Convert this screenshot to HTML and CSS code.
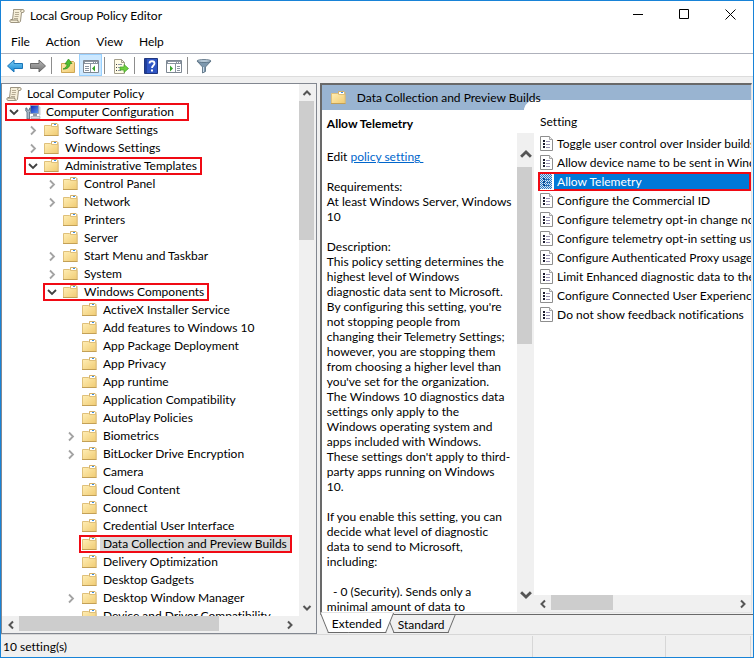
FILE: index.html
```html
<!DOCTYPE html>
<html lang="en">

<head>
    <meta charset="UTF-8">
    <title>Local Group Policy Editor</title>
    <link rel="stylesheet" href="styles.css">
</head>

<body>
    <svg class="sprite" aria-hidden="true">
        <defs>
            <linearGradient id="folder-fill" x1="0" y1="0" x2="1" y2="1">
                <stop offset="0" stop-color="#ffeeb5" />
                <stop offset="1" stop-color="#f0cb72" />
            </linearGradient>
            <linearGradient id="blue-fill" x1="0" y1="0" x2="0" y2="1">
                <stop offset="0" stop-color="#7fd0f5" />
                <stop offset="1" stop-color="#1284d2" />
            </linearGradient>
            <linearGradient id="gray-fill" x1="0" y1="0" x2="0" y2="1">
                <stop offset="0" stop-color="#b9b9b9" />
                <stop offset="1" stop-color="#717171" />
            </linearGradient>
            <linearGradient id="screen-fill" x1="0" y1="0" x2="1" y2="1">
                <stop offset="0" stop-color="#0a1fae" />
                <stop offset="1" stop-color="#5f9cf5" />
            </linearGradient>
            <symbol id="folder" viewBox="0 0 16 16">
                <path d="M7.500 1.500h5.500l1 1v11H7.500z" fill="#ecd08a" stroke="#d3b06a" />
                <path d="M8 2h5v2H8z" fill="#fff" />
                <path d="M10 2h2v1h-2z" fill="#3d8fe0" />
                <path d="M.5 3.500h6l1.500 1h6v9H.5z" fill="url(#folder-fill)" stroke="#dfc07a" />
                <path d="M0 13.500h14.500" stroke="#c3a056" />
            </symbol>
            <symbol id="scroll" viewBox="0 0 16 16">
                <path d="M4.500 1.500h9.500c1.500 0 1.500 3 0 3h-1.500l-1 8.500c0 1-1 1.500-2 1.500H2c-1.500 0-1.500-3 0-3h1.500l1-8z" fill="#f6efd9" stroke="#9c9480" />
                <path d="M12.500 4.500c-1.500-.5-1-3 1-3" fill="none" stroke="#9c9480" />
                <path d="M2 12h7c-.8 1 0 2 1 2" fill="none" stroke="#8a826c" />
                <path d="M6 4.500h4M6 6.500h4M5.500 8.500h4M5 10.500h4" stroke="#b5ab93" />
            </symbol>
            <symbol id="computer" viewBox="0 0 16 16">
                <path d="M5.500 1.500h8v8h-8z" fill="url(#screen-fill)" stroke="#8f9db8" />
                <path d="M14 2l1.500 1v8l-1.500 1z" fill="#c8ced6" />
                <path d="M8 10h4v2H8z" fill="#8d97a5" />
                <path d="M6 12.500h9v2H6z" fill="#d8dde4" stroke="#8b95a2" stroke-width=".6" />
                <path d="M.8 4v3l1.200 1v7h2.500V8l1.200-1V4L4.500 4v2H2V4z" fill="#a8b8c8" stroke="#4f6478" stroke-width=".8" />
            </symbol>
            <symbol id="page" viewBox="0 0 14 16">
                <path d="M.5.500h9l3 3v11H.5z" fill="#fff" stroke="#8e8e8e" />
                <path d="M9.500.500v3h3" fill="#eee" stroke="#a5a5a5" />
                <path d="M3 4h2v2H3zM3 7h2v2H3zM3 10h2v2H3z" fill="#1c1c30" />
                <path d="M6 5.500h4M6 8.500h4M6 11.500h4" stroke="#9a93b5" />
            </symbol>
            <pattern id="dots" width="2" height="2" patternUnits="userSpaceOnUse">
                <path d="M0 0h2v2H0z" fill="#d6e4f2" />
                <path d="M0 0h1v1H0zM1 1h1v1H1z" fill="#2878c4" />
            </pattern>
            <symbol id="page-selected" viewBox="0 0 14 16">
                <path d="M0 0h14v16H0z" fill="#fff" />
                <path d="M0 0h12v15H0z" fill="url(#dots)" />
                <path d="M3 4h2v2H3zM3 7h2v2H3zM3 10h2v2H3z" fill="#0a4a90" />
                <path d="M6 5.500h4M6 8.500h4M6 11.500h4" stroke="#2c6fb4" />
            </symbol>
            <symbol id="chevron-right" viewBox="0 0 12 12">
                <path d="M4 2.500l4 4-4 4" fill="none" stroke="#a3a3a3" stroke-width="1.800" />
            </symbol>
            <symbol id="chevron-down" viewBox="0 0 12 12">
                <path d="M2 4l4 4 4-4" fill="none" stroke="#404040" stroke-width="1.800" />
            </symbol>
            <symbol id="arrow" viewBox="0 0 10 10">
                <path d="M1.500 7L5 3.500 8.500 7" fill="none" stroke="#555" stroke-width="2" />
            </symbol>
        </defs>
    </svg>

    <div class="window">
        <header class="titlebar">
            <svg class="icon"><use href="#scroll" /></svg>
            <h1>Local Group Policy Editor</h1>
            <div class="controls">
                <button aria-label="Minimize"><svg width="11" height="11"><path d="M0 5.500h10" stroke="#000" /></svg></button>
                <button aria-label="Maximize"><svg width="11" height="11"><path d="M.5.500h9v9h-9z" fill="none" stroke="#000" /></svg></button>
                <button aria-label="Close"><svg width="11" height="11"><path d="M.5.500l10 10M10.500.500l-10 10" stroke="#000" /></svg></button>
            </div>
        </header>

        <nav class="menu">
            <button>File</button>
            <button>Action</button>
            <button>View</button>
            <button>Help</button>
        </nav>

        <div class="toolbar">
            <button aria-label="Back">
                <svg class="icon" viewBox="0 0 16 16"><path d="M.5 8L7 2v3.500h8.500v5H7V14z" fill="url(#blue-fill)" stroke="#1a75b8" /></svg>
            </button>
            <button aria-label="Forward">
                <svg class="icon" viewBox="0 0 16 16"><path d="M15.500 8L9 2v3.500H.5v5H9V14z" fill="url(#gray-fill)" stroke="#6a6a6a" /></svg>
            </button>
            <span class="sep"></span>
            <button aria-label="Up one level">
                <svg class="icon" viewBox="0 0 16 16">
                    <path d="M1.500 5.500h6l1-2h5l1 1v10h-13z" fill="url(#folder-fill)" stroke="#cda654" />
                    <path d="M3 11c3-1 4-3 4-5H5l3.500-5L12 5.500h-2C10 9 7 11.500 3 11z" fill="#4fbf2f" stroke="#2c8a1b" stroke-width=".7" />
                </svg>
            </button>
            <button class="active" aria-label="Show/Hide Console Tree">
                <svg class="icon" viewBox="0 0 16 16">
                    <path d="M.5 2.500h15v12H.5z" fill="#fff" stroke="#7d8792" />
                    <path d="M1 3h14v3H1z" fill="#8b95a1" />
                    <path d="M2 4.500h8M11 4.500h1M13 4.500h1" stroke="#fff" />
                    <path d="M7.500 6v8M2 8.500h4M2 10.500h4M2 12.500h4" stroke="#8b95a1" />
                    <path d="M12 7.500v6l-3-3z" fill="#35a329" />
                </svg>
            </button>
            <span class="sep"></span>
            <button aria-label="Export List">
                <svg class="icon" viewBox="0 0 16 16">
                    <path d="M1.500 1.500h7l3 3v11h-10z" fill="#fffbe6" stroke="#a39f8c" />
                    <path d="M8.500 1.500v3h3" fill="none" stroke="#a39f8c" />
                    <path d="M3 6.500h1M3 9.500h1M3 12.500h1" stroke="#444" />
                    <path d="M5 6.500h4M5 9.500h3M5 12.500h3" stroke="#8d97a8" />
                    <path d="M7 9h4V6.500l4.500 4-4.500 4V12H7z" fill="#6fcf3f" stroke="#3f9f22" stroke-width=".7" />
                </svg>
            </button>
            <span class="sep"></span>
            <button aria-label="Help">
                <svg class="icon" viewBox="0 0 16 16">
                    <path d="M1.500.500h13v15h-13z" fill="#2f55c4" stroke="#20377f" />
                    <path d="M2 1h2v14H2z" fill="#203f9c" />
                    <path d="M6.500 5.500c0-3 5-3 5 0 0 2-2.500 2-2.500 4.500" fill="none" stroke="#fff" stroke-width="1.800" />
                    <path d="M8 11.500h2v2H8z" fill="#fff" />
                </svg>
            </button>
            <button aria-label="Show/Hide Action Pane">
                <svg class="icon" viewBox="0 0 16 16">
                    <path d="M.5 2.500h15v12H.5z" fill="#fff" stroke="#7d8792" />
                    <path d="M1 3h14v3H1z" fill="#8b95a1" />
                    <path d="M2 4.500h8M11 4.500h1M13 4.500h1" stroke="#fff" />
                    <path d="M9.500 6v8M11 8.500h3M11 10.500h3M11 12.500h3" stroke="#8b95a1" />
                    <path d="M4 7.500v6l3-3z" fill="#35a329" />
                </svg>
            </button>
            <span class="sep"></span>
            <button aria-label="Filter">
                <svg class="icon" viewBox="0 0 16 16">
                    <path d="M1 3l5.500 6v6l3-1.500V9L15 3z" fill="#7d98ae" stroke="#52697c" stroke-width=".8" />
                    <path d="M7.500 9v5" stroke="#c9dae8" />
                    <ellipse cx="8" cy="3" rx="7" ry="1.500" fill="#b9cbd9" stroke="#52697c" stroke-width=".8" />
                </svg>
            </button>
        </div>

        <main class="panes">
            <section class="tree-pane">
                <div class="tree-view">
                    <div class="node root"><svg class="icon"><use href="#scroll" /></svg><span>Local Computer Policy</span></div>
                    <ul class="tree">
                        <li>
                            <div class="node marked roomy"><button aria-label="Collapse"><svg><use href="#chevron-down" /></svg></button><svg class="icon"><use href="#computer" /></svg><span>Computer Configuration</span></div>
                            <ul>
                                <li><div class="node"><button aria-label="Expand"><svg><use href="#chevron-right" /></svg></button><svg class="icon"><use href="#folder" /></svg><span>Software Settings</span></div></li>
                                <li><div class="node"><button aria-label="Expand"><svg><use href="#chevron-right" /></svg></button><svg class="icon"><use href="#folder" /></svg><span>Windows Settings</span></div></li>
                                <li>
                                    <div class="node marked"><button aria-label="Collapse"><svg><use href="#chevron-down" /></svg></button><svg class="icon"><use href="#folder" /></svg><span>Administrative Templates</span></div>
                                    <ul>
                                        <li><div class="node"><button aria-label="Expand"><svg><use href="#chevron-right" /></svg></button><svg class="icon"><use href="#folder" /></svg><span>Control Panel</span></div></li>
                                        <li><div class="node"><button aria-label="Expand"><svg><use href="#chevron-right" /></svg></button><svg class="icon"><use href="#folder" /></svg><span>Network</span></div></li>
                                        <li><div class="node leaf"><svg class="icon"><use href="#folder" /></svg><span>Printers</span></div></li>
                                        <li><div class="node leaf"><svg class="icon"><use href="#folder" /></svg><span>Server</span></div></li>
                                        <li><div class="node"><button aria-label="Expand"><svg><use href="#chevron-right" /></svg></button><svg class="icon"><use href="#folder" /></svg><span>Start Menu and Taskbar</span></div></li>
                                        <li><div class="node"><button aria-label="Expand"><svg><use href="#chevron-right" /></svg></button><svg class="icon"><use href="#folder" /></svg><span>System</span></div></li>
                                        <li>
                                            <div class="node marked"><button aria-label="Collapse"><svg><use href="#chevron-down" /></svg></button><svg class="icon"><use href="#folder" /></svg><span>Windows Components</span></div>
                                            <ul>
                                                <li><div class="node leaf"><svg class="icon"><use href="#folder" /></svg><span>ActiveX Installer Service</span></div></li>
                                                <li><div class="node leaf"><svg class="icon"><use href="#folder" /></svg><span>Add features to Windows 10</span></div></li>
                                                <li><div class="node leaf"><svg class="icon"><use href="#folder" /></svg><span>App Package Deployment</span></div></li>
                                                <li><div class="node leaf"><svg class="icon"><use href="#folder" /></svg><span>App Privacy</span></div></li>
                                                <li><div class="node leaf"><svg class="icon"><use href="#folder" /></svg><span>App runtime</span></div></li>
                                                <li><div class="node leaf"><svg class="icon"><use href="#folder" /></svg><span>Application Compatibility</span></div></li>
                                                <li><div class="node leaf"><svg class="icon"><use href="#folder" /></svg><span>AutoPlay Policies</span></div></li>
                                                <li><div class="node"><button aria-label="Expand"><svg><use href="#chevron-right" /></svg></button><svg class="icon"><use href="#folder" /></svg><span>Biometrics</span></div></li>
                                                <li><div class="node"><button aria-label="Expand"><svg><use href="#chevron-right" /></svg></button><svg class="icon"><use href="#folder" /></svg><span>BitLocker Drive Encryption</span></div></li>
                                                <li><div class="node leaf"><svg class="icon"><use href="#folder" /></svg><span>Camera</span></div></li>
                                                <li><div class="node leaf"><svg class="icon"><use href="#folder" /></svg><span>Cloud Content</span></div></li>
                                                <li><div class="node leaf"><svg class="icon"><use href="#folder" /></svg><span>Connect</span></div></li>
                                                <li><div class="node leaf"><svg class="icon"><use href="#folder" /></svg><span>Credential User Interface</span></div></li>
                                                <li><div class="node leaf marked selected"><svg class="icon"><use href="#folder" /></svg><span>Data Collection and Preview Builds</span></div></li>
                                                <li><div class="node leaf"><svg class="icon"><use href="#folder" /></svg><span>Delivery Optimization</span></div></li>
                                                <li><div class="node leaf"><svg class="icon"><use href="#folder" /></svg><span>Desktop Gadgets</span></div></li>
                                                <li><div class="node"><button aria-label="Expand"><svg><use href="#chevron-right" /></svg></button><svg class="icon"><use href="#folder" /></svg><span>Desktop Window Manager</span></div></li>
                                                <li><div class="node leaf"><svg class="icon"><use href="#folder" /></svg><span>Device and Driver Compatibility</span></div></li>
                                            </ul>
                                        </li>
                                    </ul>
                                </li>
                            </ul>
                        </li>
                    </ul>
                </div>
                <div class="vscroll">
                    <button class="up" aria-label="Scroll up"><svg><use href="#arrow" /></svg></button>
                    <div class="track"><div class="thumb tree-v"></div></div>
                    <button class="down" aria-label="Scroll down"><svg><use href="#arrow" /></svg></button>
                </div>
                <div class="hscroll">
                    <button class="left" aria-label="Scroll left"><svg><use href="#arrow" /></svg></button>
                    <div class="track"><div class="thumb tree-h"></div></div>
                    <button class="right" aria-label="Scroll right"><svg><use href="#arrow" /></svg></button>
                </div>
            </section>

            <section class="result-pane">
                <div class="result-view">
                    <div class="result-head"><svg class="icon"><use href="#folder" /></svg><h2>Data Collection and Preview Builds</h2></div>
                    <div class="details">
                        <h3>Allow Telemetry</h3>
                        <p>Edit <a href="#">policy setting </a></p>
                        <p>Requirements:
At least Windows Server, Windows
10</p>
                        <p>Description:
This policy setting determines the
highest level of Windows
diagnostic data sent to Microsoft.
By configuring this setting, you're
not stopping people from
changing their Telemetry Settings;
however, you are stopping them
from choosing a higher level than
you've set for the organization.
The Windows 10 diagnostics data
settings only apply to the
Windows operating system and
apps included with Windows.
These settings don't apply to third-
party apps running on Windows
10.</p>
                        <p>If you enable this setting, you can
decide what level of diagnostic
data to send to Microsoft,
including:</p>
                        <p>  - 0 (Security). Sends only a
minimal amount of data to</p>
                    </div>
                    <div class="vscroll big">
                        <button class="up" aria-label="Scroll up"><svg><use href="#arrow" /></svg></button>
                        <div class="track"><div class="thumb details-v"></div></div>
                        <button class="down" aria-label="Scroll down"><svg><use href="#arrow" /></svg></button>
                    </div>
                    <div class="settings">
                        <table>
                            <thead>
                                <tr><th>Setting</th></tr>
                            </thead>
                            <tbody>
                                <tr><td><svg class="page"><use href="#page" /></svg><span>Toggle user control over Insider builds</span></td></tr>
                                <tr><td><svg class="page"><use href="#page" /></svg><span>Allow device name to be sent in Windows diagnostic data</span></td></tr>
                                <tr class="current"><td><svg class="page"><use href="#page-selected" /></svg><span>Allow Telemetry</span></td></tr>
                                <tr><td><svg class="page"><use href="#page" /></svg><span>Configure the Commercial ID</span></td></tr>
                                <tr><td><svg class="page"><use href="#page" /></svg><span>Configure telemetry opt-in change notifications</span></td></tr>
                                <tr><td><svg class="page"><use href="#page" /></svg><span>Configure telemetry opt-in setting user interface</span></td></tr>
                                <tr><td><svg class="page"><use href="#page" /></svg><span>Configure Authenticated Proxy usage</span></td></tr>
                                <tr><td><svg class="page"><use href="#page" /></svg><span>Limit Enhanced diagnostic data to the minimum</span></td></tr>
                                <tr><td><svg class="page"><use href="#page" /></svg><span>Configure Connected User Experiences</span></td></tr>
                                <tr><td><svg class="page"><use href="#page" /></svg><span>Do not show feedback notifications</span></td></tr>
                            </tbody>
                        </table>
                        <div class="hscroll">
                            <button class="left" aria-label="Scroll left"><svg><use href="#arrow" /></svg></button>
                            <div class="track"><div class="thumb settings-h"></div></div>
                            <button class="right" aria-label="Scroll right"><svg><use href="#arrow" /></svg></button>
                        </div>
                    </div>
                </div>
                <div class="tabs">
                    <button class="tab open"><span>Extended</span></button>
                    <button class="tab"><span>Standard</span></button>
                </div>
            </section>
        </main>

        <footer class="status">
            <span>10 setting(s)</span>
            <span></span>
            <span></span>
        </footer>
    </div>
</body>

</html>
```
FILE: styles.css
```css
* {
    box-sizing: border-box;
}

body {
    margin: 0;
    font: 12px/15px Lato, "Open Sans", sans-serif;
    font-variant-ligatures: none;
    color: #000;
}

h1,
h2,
h3,
p,
ul {
    margin: 0;
    padding: 0;
    font-size: inherit;
    font-weight: normal;
}

ul {
    list-style: none;
}

button {
    margin: 0;
    padding: 0;
    border: none;
    background: none;
    font: inherit;
    color: inherit;
}

.sprite {
    position: absolute;
    width: 0;
    height: 0;
}

.icon {
    width: 16px;
    height: 16px;
    flex: none;
}

.window {
    display: flex;
    flex-direction: column;
    height: 100vh;
    border: 1px solid #1883d7;
    background: #f0f0f0;
    overflow: hidden;
}

/* title and menu */

.titlebar {
    display: flex;
    align-items: center;
    height: 29px;
    padding-left: 8px;
    gap: 5px;
    background: #fff;
}

.controls {
    display: flex;
    align-self: stretch;
    margin-left: auto;
}

.controls button {
    width: 46px;
}

.menu {
    display: flex;
    height: 24px;
    padding-left: 10px;
    gap: 16px;
    background: #fff;
    border-bottom: 1px solid #aeb1bb;
}

/* toolbar */

.toolbar {
    display: flex;
    height: 23px;
    padding-left: 2px;
    background: #fff;
    border-bottom: 1px solid #dcdcdc;
}

.toolbar button {
    display: flex;
    align-items: center;
    justify-content: center;
    width: 23px;
    padding-top: 2px;
}

.toolbar .active {
    background: #cce8ff;
    border: 1px solid #99d1ff;
}

.sep {
    width: 1px;
    margin: 3px 4px 2px 2px;
    background: #8d8d8d;
}

/* panes */

.panes {
    flex: 1;
    min-height: 0;
    display: grid;
    grid-template-columns: 42% 1fr;
    gap: 3px;
    padding-top: 6px;
}

.tree-pane {
    display: grid;
    grid-template: 1fr 17px / 1fr 17px;
    min-height: 0;
    min-width: 0;
    border: 1px solid #828790;
    background: #fff;
}

.tree-view {
    overflow: hidden;
    padding: 1px 0 0 1px;
    min-height: 0;
}

.tree {
    padding-left: 5px;
}

.tree ul {
    padding-left: 19px;
}

.node {
    position: relative;
    display: flex;
    align-items: center;
    width: max-content;
    height: 18px;
    white-space: nowrap;
}

.node button {
    display: flex;
    width: 12px;
    margin-right: 5px;
}

.node button svg {
    width: 12px;
    height: 12px;
}

.node span {
    margin-left: 2px;
    padding: 0 3px;
    line-height: 18px;
}

.root {
    padding-left: 3px;
}

.leaf {
    margin-left: 17px;
}

.selected span {
    background: #d9d9d9;
}

.marked::after {
    content: "";
    position: absolute;
    inset: 0 -2px 0 -3px;
    border: 2px solid #f00a14;
}

.roomy::after {
    right: -12px;
}

/* scrollbars */

.vscroll,
.hscroll {
    display: flex;
    background: #f0f0f0;
}

.vscroll {
    flex-direction: column;
}

.vscroll button,
.hscroll button {
    display: flex;
    align-items: center;
    justify-content: center;
    width: 17px;
    height: 17px;
}

.vscroll svg,
.hscroll svg {
    width: 10px;
    height: 10px;
}

.track {
    flex: 1;
}

.thumb {
    background: #cdcdcd;
}

.vscroll .thumb {
    width: 15px;
}

.hscroll .thumb {
    height: 15px;
}

.down svg {
    transform: rotate(180deg);
}

.left svg {
    transform: rotate(-90deg);
}

.right svg {
    transform: rotate(90deg);
}

.tree-pane .hscroll {
    grid-column: 1 / 3;
    padding-right: 17px;
}

.tree-v {
    height: 28%;
}

.tree-h {
    width: 76%;
}

.big .up,
.big .down {
    height: 34px;
}

.big .up {
    padding-top: 8px;
}

.big svg {
    width: 14px;
    height: 14px;
}

.details-v {
    height: 43%;
}

.settings-h {
    width: 34%;
}

/* right side */

.result-pane {
    display: flex;
    flex-direction: column;
    min-width: 0;
    min-height: 0;
}

.result-view {
    flex: 1;
    min-height: 0;
    display: grid;
    grid-template: 25px 1fr / 45.5% 17px 1fr;
    margin-right: 1px;
    border: 1px solid #e3e3e3;
    border-top: 2px solid #696969;
    border-left: 2px solid #696969;
    background: #fff;
}

.result-head {
    grid-column: 1 / 4;
    position: relative;
    display: flex;
    align-items: center;
    gap: 10px;
    padding-left: 9px;
    background: #99b4d1;
}

.result-head::before {
    content: "";
    position: absolute;
    left: 47%;
    right: 0;
    bottom: 0;
    height: 10px;
    background: #fff;
    clip-path: polygon(0 100%, 2px 5px, 7px 0, 100% 0, 100% 100%);
}

.result-head h2 {
    position: relative;
}

.details {
    padding: 6px 0 0 5px;
    overflow: hidden;
}

.details h3 {
    font-weight: bold;
    margin-bottom: 18px;
}

.details p {
    margin-bottom: 15px;
    white-space: pre;
}

.details a {
    color: #0066cc;
}

.result-view .vscroll {
    margin-top: 23px;
}

.settings {
    display: flex;
    flex-direction: column;
    justify-content: space-between;
    min-width: 0;
    min-height: 0;
}

.settings table {
    display: block;
    overflow: hidden;
    border-spacing: 0;
}

.settings tbody,
.settings thead,
.settings tr,
.settings th,
.settings td {
    display: block;
}

.settings th {
    height: 24px;
    padding: 4px 6px;
    font-weight: normal;
    text-align: left;
}

.settings td {
    display: flex;
    align-items: center;
    height: 19px;
    margin-left: 4px;
    padding-left: 2px;
    gap: 3px;
    white-space: nowrap;
}

.page {
    flex: none;
    width: 14px;
    height: 16px;
}

.current td {
    padding-left: 0;
    border: 2px solid #f00a14;
    background: #0078d7;
    color: #fff;
}

/* tabs */

.tabs {
    display: flex;
    height: 20px;
    margin-top: 1px;
    border-top: 1px solid #696969;
}

.tab {
    position: relative;
    height: 18px;
    padding: 0 12px;
}

.tab span {
    position: relative;
    z-index: 1;
}

.tab::before,
.tab::after {
    content: "";
    position: absolute;
    top: 0;
    bottom: 0;
    width: 50%;
    border-bottom: 1px solid #696969;
}

.tab::before {
    left: 4px;
    border-left: 1px solid #696969;
    transform: skewX(22deg);
}

.tab::after {
    right: 4px;
    border-right: 1px solid #696969;
    transform: skewX(-22deg);
}

.tab + .tab {
    margin-left: -8px;
}

.open {
    z-index: 1;
    height: 20px;
    margin-top: -2px;
}

.open::before,
.open::after {
    background: #fff;
}

/* status bar */

.status {
    display: grid;
    grid-template-columns: 1fr 133px 85px;
    height: 23px;
    padding: 1px 2px 1px 0;
    border-top: 1px solid #d7d7d7;
}

.status span {
    padding: 3px 2px;
    border-right: 1px solid #d7d7d7;
}
```
